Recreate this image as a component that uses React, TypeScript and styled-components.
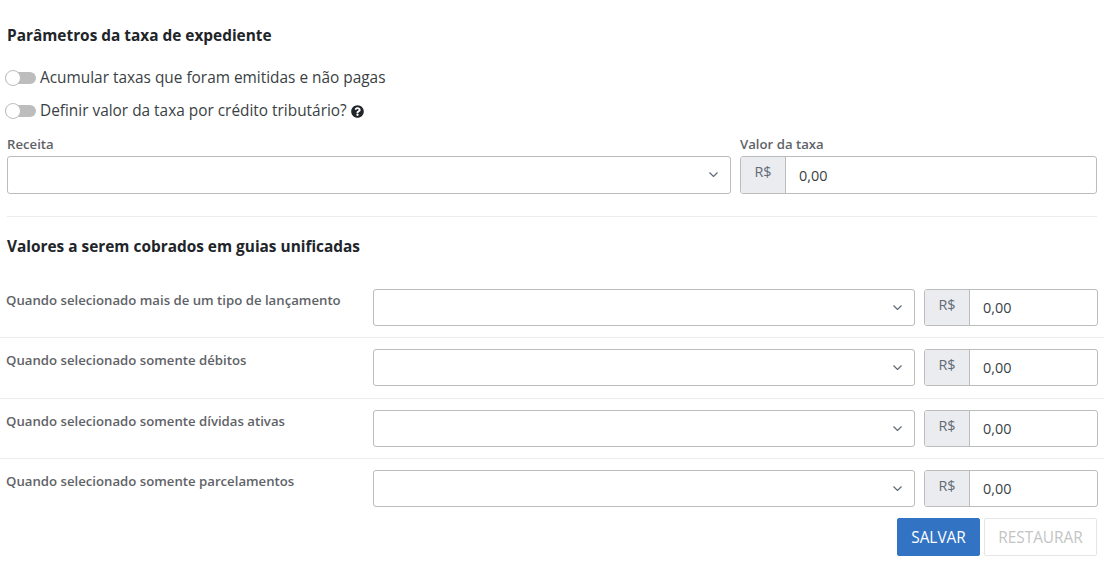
import React from 'react';
import styled, { createGlobalStyle } from 'styled-components';
import { FaQuestionCircle } from 'react-icons/fa';

const GlobalStyle = createGlobalStyle`
    html, body {
        margin: 0;
        padding: 0;
        background: #fff;
        font-family: "Open Sans", "Liberation Sans", sans-serif;
    }
`;

const Page = styled.div`
    width: 1104px;
    height: 569px;
    box-sizing: border-box;
    overflow: hidden;
    padding-top: 26px;
`;

const SectionTitle = styled.h2`
    margin: 0 0 0 7px;
    height: 20px;
    font-size: 15.4px;
    line-height: 20px;
    font-weight: 700;
    color: #212529;
`;

const ToggleList = styled.div`
    display: flex;
    flex-direction: column;
    gap: 13px;
    margin: 22px 0 0 5px;
`;

const ToggleRow = styled.label`
    display: flex;
    align-items: center;
    height: 20px;
    font-size: 15.4px;
    line-height: 18px;
    color: #3a3f44;
`;

const ToggleTrack = styled.span`
    position: relative;
    flex: none;
    display: block;
    width: 31px;
    height: 12px;
    margin-right: 4px;
    border-radius: 6px;
    background: #bdbdbd;
`;

const ToggleKnob = styled.span`
    position: absolute;
    left: 0;
    top: -2px;
    width: 16px;
    height: 16px;
    box-sizing: border-box;
    border-radius: 50%;
    background: #fff;
    border: 1px solid #bdbdbd;
`;

const HelpIcon = styled(FaQuestionCircle)`
    margin-left: 4px;
    width: 13px;
    height: 13px;
    color: #212529;
`;

const FieldsRow = styled.div`
    display: flex;
    gap: 9px;
    margin: 15px 7px 0 7px;
`;

const Field = styled.div<{ $width: number }>`
    width: ${props => props.$width}px;
    flex: none;
`;

const FieldLabel = styled.div`
    height: 16px;
    margin-bottom: 4px;
    font-size: 13.2px;
    line-height: 16px;
    font-weight: 600;
    color: #5f6368;
`;

const SelectBox = styled.div<{ $height: number }>`
    display: flex;
    align-items: center;
    justify-content: flex-end;
    height: ${props => props.$height}px;
    box-sizing: border-box;
    padding: 0 12px 1px 0;
    background: #fff;
    border: 1px solid #bcbcbc;
    border-radius: 3px;
    color: #5f6b76;
`;

const InputGroup = styled.div<{ $height: number }>`
    display: flex;
    height: ${props => props.$height}px;
    box-sizing: border-box;
    border: 1px solid #bcbcbc;
    border-radius: 3px;
    overflow: hidden;
`;

const Addon = styled.div`
    flex: none;
    width: 45px;
    box-sizing: border-box;
    padding-top: 5px;
    text-align: center;
    font-size: 14.4px;
    line-height: 19px;
    color: #5f6b76;
    background: #ebecef;
    border-right: 1px solid #bcbcbc;
`;

const Amount = styled.div<{ $lineHeight: number }>`
    flex: 1;
    padding-left: 13px;
    font-size: 14.4px;
    line-height: ${props => props.$lineHeight}px;
    color: #3a3f44;
`;

const Divider = styled.hr`
    margin: 22px 7px 0 7px;
    border: 0;
    border-top: 1px solid #ececec;
`;

const SecondTitle = styled(SectionTitle)`
    margin-top: 20px;
`;

const Rows = styled.div`
    margin-top: 21px;
`;

const ChargeRow = styled.div<{ $height: number }>`
    display: grid;
    grid-template-columns: 358px 542px 174px;
    column-gap: 9px;
    height: ${props => props.$height}px;
    box-sizing: border-box;
    padding: 11px 6px 0 6px;
    border-bottom: 1px solid #ececec;

    &:last-child {
        border-bottom: 0;
    }
`;

const ChargeLabel = styled.div`
    padding-top: 2px;
    font-size: 13.2px;
    line-height: 18px;
    font-weight: 600;
    color: #5f6368;
    white-space: nowrap;
`;

const Actions = styled.div`
    display: flex;
    justify-content: flex-end;
    gap: 4px;
    margin: 10px 7px 0 0;
`;

const Button = styled.button<{ $primary?: boolean; $width: number }>`
    width: ${props => props.$width}px;
    height: 38px;
    box-sizing: border-box;
    padding: 0;
    font-family: inherit;
    font-size: 15.4px;
    border-radius: 2px;
    border: 1px solid ${props => (props.$primary ? '#3273c4' : '#e6e6e6')};
    background: ${props => (props.$primary ? '#3273c4' : '#fff')};
    color: ${props => (props.$primary ? '#fff' : '#c4c4c4')};
`;

const Chevron = () => (
    <svg width="9" height="5" viewBox="0 0 9 5" fill="none" stroke="currentColor" strokeWidth="1.2">
        <path d="M0.5 0.5 L4.5 4.5 L8.5 0.5" />
    </svg>
);

const charges = [
    { label: 'Quando selecionado mais de um tipo de lançamento', rowHeight: 60 },
    { label: 'Quando selecionado somente débitos', rowHeight: 61 },
    { label: 'Quando selecionado somente dívidas ativas', rowHeight: 60 },
    { label: 'Quando selecionado somente parcelamentos', rowHeight: 49 },
];

const App: React.FunctionComponent = () => (
    <Page>
        <GlobalStyle />
        <SectionTitle>Parâmetros da taxa de expediente</SectionTitle>
        <ToggleList>
            <ToggleRow>
                <ToggleTrack><ToggleKnob /></ToggleTrack>
                Acumular taxas que foram emitidas e não pagas
            </ToggleRow>
            <ToggleRow>
                <ToggleTrack><ToggleKnob /></ToggleTrack>
                Definir valor da taxa por crédito tributário?
                <HelpIcon />
            </ToggleRow>
        </ToggleList>
        <FieldsRow>
            <Field $width={724}>
                <FieldLabel>Receita</FieldLabel>
                <SelectBox $height={38}><Chevron /></SelectBox>
            </Field>
            <Field $width={357}>
                <FieldLabel>Valor da taxa</FieldLabel>
                <InputGroup $height={38}>
                    <Addon>R$</Addon>
                    <Amount $lineHeight={38}>0,00</Amount>
                </InputGroup>
            </Field>
        </FieldsRow>
        <Divider />
        <SecondTitle>Valores a serem cobrados em guias unificadas</SecondTitle>
        <Rows>
            {charges.map(charge => (
                <ChargeRow key={charge.label} $height={charge.rowHeight}>
                    <ChargeLabel>{charge.label}</ChargeLabel>
                    <SelectBox $height={37}><Chevron /></SelectBox>
                    <InputGroup $height={37}>
                        <Addon>R$</Addon>
                        <Amount $lineHeight={36}>0,00</Amount>
                    </InputGroup>
                </ChargeRow>
            ))}
        </Rows>
        <Actions>
            <Button $primary $width={83}>SALVAR</Button>
            <Button $width={113}>RESTAURAR</Button>
        </Actions>
    </Page>
);

export default App;
